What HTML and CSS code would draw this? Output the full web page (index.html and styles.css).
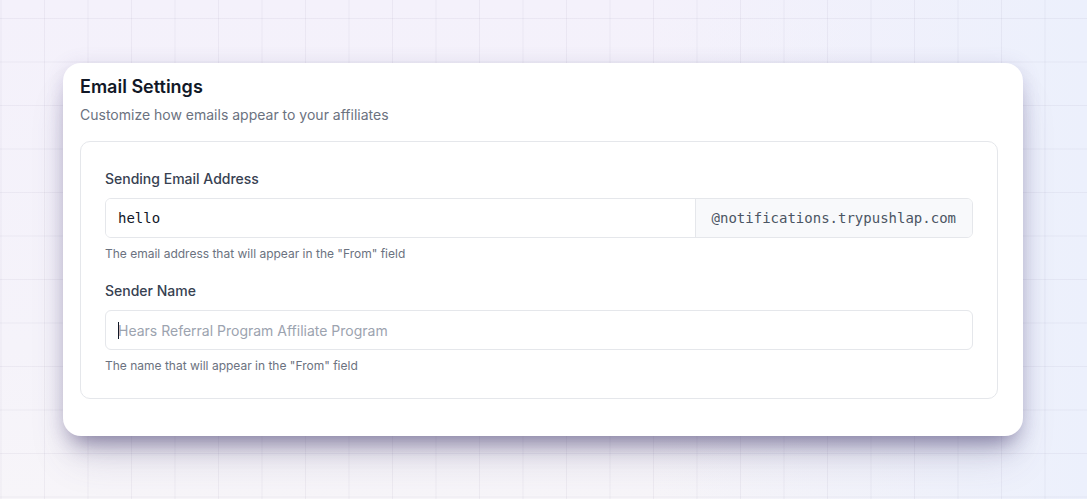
FILE: index.html
```html
<!DOCTYPE html>
<html lang="en">
<head>
    <meta charset="UTF-8">
    <meta name="viewport" content="width=device-width, initial-scale=1.0">
    <title>Email Settings</title>
    <link rel="stylesheet" href="styles.css">
</head>
<body>
    <div class="page">
        <div class="card">
            <h1>Email Settings</h1>
            <p class="subtitle">Customize how emails appear to your affiliates</p>

            <div class="panel">
                <div class="form-group">
                    <label for="sending_email">Sending Email Address</label>
                    <div class="input-group">
                        <input type="text" id="sending_email" class="mono" value="hello">
                        <span class="addon">@notifications.trypushlap.com</span>
                    </div>
                    <p class="help">The email address that will appear in the "From" field</p>
                </div>

                <div class="form-group">
                    <label for="sender_name">Sender Name</label>
                    <div class="field">
                        <input type="text" id="sender_name" placeholder="Hears Referral Program Affiliate Program">
                        <span class="caret"></span>
                    </div>
                    <p class="help">The name that will appear in the "From" field</p>
                </div>
            </div>
        </div>
    </div>
</body>
</html>
```

FILE: styles.css
```css
* {
    margin: 0;
    padding: 0;
    box-sizing: border-box;
    font-family: 'Inter', 'Noto Sans', sans-serif;
}

body {
    min-height: 100vh;
    background-color: #f4f1fa;
    background-image:
        linear-gradient(to right, rgba(110, 100, 140, 0.075) 1px, transparent 1px),
        linear-gradient(to bottom, rgba(110, 100, 140, 0.075) 1px, transparent 1px),
        linear-gradient(to right, rgba(244, 240, 252, 0) 60%, rgba(236, 240, 252, 1)),
        linear-gradient(to bottom, #f4f1fb, #f5f3fa 70%, #f7f5f9);
    background-size: 43.5px 43.5px, 43.5px 43.5px, 100% 100%, 100% 100%;
    background-position: 0.5px 18px, 0.5px 18px, 0 0, 0 0;
}

.page {
    padding: 63px 64px 0 63px;
}

.card {
    background: white;
    border-radius: 18px;
    padding: 10px 25px 37px 17px;
    box-shadow: 0 16px 22px -10px rgba(60, 50, 100, 0.5),
                0 28px 40px -8px rgba(80, 70, 120, 0.18),
                0 2px 20px rgba(90, 80, 140, 0.14);
}

h1 {
    font-size: 18px;
    line-height: 28px;
    font-weight: 600;
    color: #111827;
}

.subtitle {
    margin-top: 4px;
    font-size: 14px;
    line-height: 20px;
    color: #6b7280;
}

.panel {
    margin-top: 16px;
    border: 1px solid #e5e7eb;
    border-radius: 10px;
    padding: 27px 24px 24px 24px;
}

.form-group + .form-group {
    margin-top: 19px;
}

label {
    display: block;
    font-size: 14px;
    line-height: 20px;
    font-weight: 500;
    color: #374151;
    margin-bottom: 9px;
}

.input-group {
    display: flex;
    height: 40px;
    border: 1px solid #e5e7eb;
    border-radius: 6px;
    overflow: hidden;
}

.input-group input {
    flex: 1;
    border: none;
}

.addon {
    display: flex;
    align-items: center;
    padding: 0 16px;
    background: #f8f9fb;
    border-left: 1px solid #e5e7eb;
    color: #4b5563;
    font-family: 'DejaVu Sans Mono', monospace;
    font-size: 14px;
}

input {
    height: 38px;
    padding: 0 12px;
    font-size: 14px;
    color: #111827;
    background: white;
    outline: none;
}

input::placeholder {
    color: #9ca3af;
}

.mono {
    font-family: 'DejaVu Sans Mono', monospace;
}

.field {
    position: relative;
}

.field input {
    width: 100%;
    height: 40px;
    border: 1px solid #e5e7eb;
    border-radius: 6px;
}

/* text cursor shown in the focused name field */
.caret {
    position: absolute;
    left: 13px;
    top: 12px;
    width: 1px;
    height: 17px;
    background: #111827;
}

.help {
    margin-top: 8px;
    font-size: 12px;
    line-height: 16px;
    color: #6b7280;
}
```
